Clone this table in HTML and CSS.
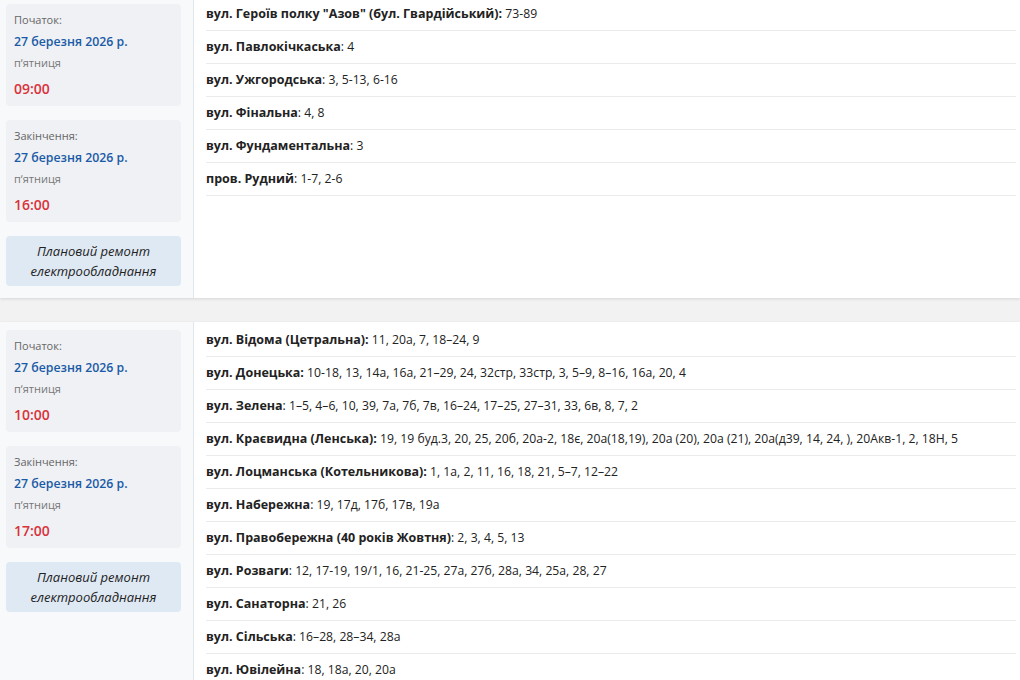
FILE: index.html
```html
<!DOCTYPE html>
<html lang="uk">
<head>
  <meta charset="UTF-8">
  <meta name="viewport" content="width=device-width, initial-scale=1.0">
  <title>Планові відключення</title>
  <link rel="stylesheet" href="styles.css">
</head>
<body>
  <div class="outage">
    <div class="outage-side">
      <div class="time-box">
        <div class="time-label">Початок:</div>
        <div class="time-date">27 березня 2026 р.</div>
        <div class="time-day">пʼятниця</div>
        <div class="time-hour">09:00</div>
      </div>
      <div class="time-box">
        <div class="time-label">Закінчення:</div>
        <div class="time-date">27 березня 2026 р.</div>
        <div class="time-day">пʼятниця</div>
        <div class="time-hour">16:00</div>
      </div>
      <div class="reason">Плановий ремонт електрообладнання</div>
    </div>
    <ul class="streets">
      <li><b>вул. Героїв полку "Азов" (бул. Гвардійський):</b> 73-89</li>
      <li><b>вул. Павлокічкаська</b>: 4</li>
      <li><b>вул. Ужгородська</b>: 3, 5-13, 6-16</li>
      <li><b>вул. Фінальна</b>: 4, 8</li>
      <li><b>вул. Фундаментальна</b>: 3</li>
      <li><b>пров. Рудний</b>: 1-7, 2-6</li>
    </ul>
  </div>

  <div class="outage">
    <div class="outage-side">
      <div class="time-box">
        <div class="time-label">Початок:</div>
        <div class="time-date">27 березня 2026 р.</div>
        <div class="time-day">пʼятниця</div>
        <div class="time-hour">10:00</div>
      </div>
      <div class="time-box">
        <div class="time-label">Закінчення:</div>
        <div class="time-date">27 березня 2026 р.</div>
        <div class="time-day">пʼятниця</div>
        <div class="time-hour">17:00</div>
      </div>
      <div class="reason">Плановий ремонт електрообладнання</div>
    </div>
    <ul class="streets">
      <li><b>вул. Відома (Цетральна):</b> 11, 20а, 7, 18–24, 9</li>
      <li><b>вул. Донецька:</b> 10-18, 13, 14а, 16а, 21–29, 24, 32стр, 33стр, 3, 5–9, 8–16, 16а, 20, 4</li>
      <li><b>вул. Зелена</b>: 1–5, 4–6, 10, 39, 7а, 7б, 7в, 16–24, 17–25, 27–31, 33, 6в, 8, 7, 2</li>
      <li><b>вул. Краєвидна (Ленська):</b> 19, 19 буд.3, 20, 25, 20б, 20а-2, 18є, 20а(18,19), 20а (20), 20а (21), 20а(д39, 14, 24, ), 20Акв-1, 2, 18Н, 5</li>
      <li><b>вул. Лоцманська (Котельникова):</b> 1, 1а, 2, 11, 16, 18, 21, 5–7, 12–22</li>
      <li><b>вул. Набережна</b>: 19, 17д, 17б, 17в, 19а</li>
      <li><b>вул. Правобережна (40 років Жовтня)</b>: 2, 3, 4, 5, 13</li>
      <li><b>вул. Розваги</b>: 12, 17-19, 19/1, 16, 21-25, 27а, 27б, 28а, 34, 25а, 28, 27</li>
      <li><b>вул. Санаторна</b>: 21, 26</li>
      <li><b>вул. Сільська</b>: 16–28, 28–34, 28а</li>
      <li><b>вул. Ювілейна</b>: 18, 18а, 20, 20а</li>
    </ul>
  </div>
</body>
</html>
```

FILE: styles.css
```css
body {
  font-family: "Open Sans", "Noto Sans", sans-serif;
  font-size: 12.2px;
  color: #222;
  background: #f2f2f2;
  margin: 0;
}
.outage {
  display: flex;
  background: #fff;
  box-shadow: 0 1px 3px rgba(0, 0, 0, 0.12);
  margin-bottom: 24px;
}
.outage:first-child {
  margin-top: -4px;
}
.outage-side {
  width: 175px;
  flex-shrink: 0;
  padding: 8px 12px 12px 6px;
  background: #f8f9fb;
  border-right: 1px solid #e3e7ec;
}
.time-box {
  background: #eff1f4;
  border-radius: 4px;
  padding: 8px 8px 7px;
  margin-bottom: 14px;
}
.time-label {
  font-size: 11px;
  line-height: 16px;
  color: #666;
}
.time-date {
  margin-top: 4px;
  font-size: 12.3px;
  font-weight: 600;
  line-height: 20px;
  color: #1a5aa6;
}
.time-day {
  margin-top: 3px;
  font-size: 11px;
  line-height: 16px;
  color: #777;
}
.time-hour {
  margin-top: 8px;
  font-size: 14px;
  font-weight: 600;
  line-height: 20px;
  color: #d9323b;
}
.reason {
  background: #dfe9f4;
  border-radius: 4px;
  padding: 5px 8px;
  text-align: center;
  font-style: italic;
  font-size: 13px;
  line-height: 20px;
  color: #222;
}
.streets {
  flex: 1;
  list-style: none;
  margin: 0 4px 0 12px;
  padding: 2px 0 0;
}
.streets li {
  padding: 6px 0;
  line-height: 20px;
  border-bottom: 1px solid #ebebeb;
  white-space: nowrap;
}
.streets b {
  font-size: 12.5px;
  line-height: 1;
  font-weight: 700;
}
```
